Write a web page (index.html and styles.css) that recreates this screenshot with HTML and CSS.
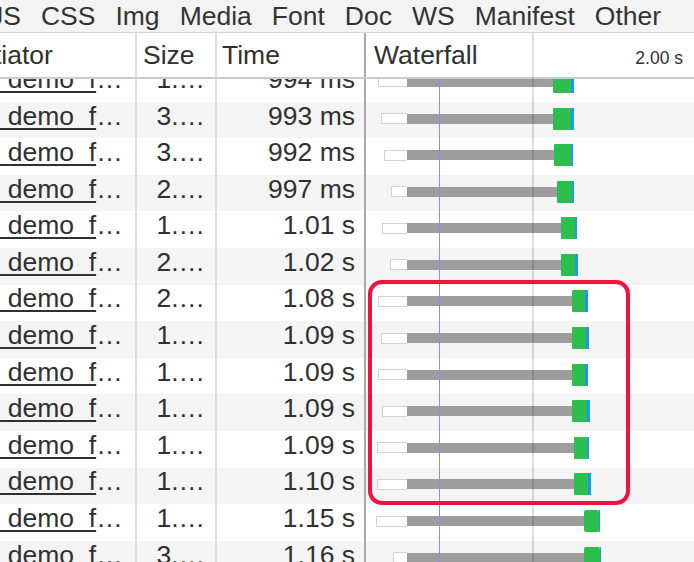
FILE: index.html
```html
<!DOCTYPE html>
<html>
<head>
<meta charset="utf-8">
<link rel="stylesheet" href="styles.css">
</head>
<body>
<div class="page">
  <div class="filters">
    <span>JS</span><span>CSS</span><span>Img</span><span>Media</span><span>Font</span><span>Doc</span><span>WS</span><span>Manifest</span><span>Other</span>
  </div>
  <div class="table">
    <div class="head">
      <div class="cell c-init"><span class="init-label">Initiator</span></div>
      <div class="cell c-size">Size</div>
      <div class="cell c-time">Time</div>
      <div class="cell c-wf"><span>Waterfall</span><span class="tick">2.00 s</span></div>
    </div>
    <div class="body">
      <div class="row first">
        <div class="cell c-init"><a class="link">_demo_f</a>…</div>
        <div class="cell c-size">1.…</div>
        <div class="cell c-time">994 ms</div>
        <div class="cell c-wf"><div class="track" style="margin-left:12px"><i class="q" style="width:29px"></i><i class="w" style="width:146px"></i><i class="g" style="width:18px"></i><i class="b" style="width:3px"></i></div></div>
      </div>
      <div class="row alt">
        <div class="cell c-init"><a class="link">_demo_f</a>…</div>
        <div class="cell c-size">3.…</div>
        <div class="cell c-time">993 ms</div>
        <div class="cell c-wf"><div class="track" style="margin-left:15px"><i class="q" style="width:26px"></i><i class="w" style="width:146px"></i><i class="g" style="width:18px"></i><i class="b" style="width:3px"></i></div></div>
      </div>
      <div class="row">
        <div class="cell c-init"><a class="link">_demo_f</a>…</div>
        <div class="cell c-size">3.…</div>
        <div class="cell c-time">992 ms</div>
        <div class="cell c-wf"><div class="track" style="margin-left:18px"><i class="q" style="width:23px"></i><i class="w" style="width:147px"></i><i class="g" style="width:17px"></i><i class="b" style="width:2px"></i></div></div>
      </div>
      <div class="row alt">
        <div class="cell c-init"><a class="link">_demo_f</a>…</div>
        <div class="cell c-size">2.…</div>
        <div class="cell c-time">997 ms</div>
        <div class="cell c-wf"><div class="track" style="margin-left:25px"><i class="q" style="width:16px"></i><i class="w" style="width:150px"></i><i class="g" style="width:15px"></i><i class="b" style="width:2px"></i></div></div>
      </div>
      <div class="row">
        <div class="cell c-init"><a class="link">_demo_f</a>…</div>
        <div class="cell c-size">1.…</div>
        <div class="cell c-time">1.01 s</div>
        <div class="cell c-wf"><div class="track" style="margin-left:16px"><i class="q" style="width:25px"></i><i class="w" style="width:154px"></i><i class="g" style="width:14px"></i><i class="b" style="width:2px"></i></div></div>
      </div>
      <div class="row alt">
        <div class="cell c-init"><a class="link">_demo_f</a>…</div>
        <div class="cell c-size">2.…</div>
        <div class="cell c-time">1.02 s</div>
        <div class="cell c-wf"><div class="track" style="margin-left:24px"><i class="q" style="width:17px"></i><i class="w" style="width:154px"></i><i class="g" style="width:14px"></i><i class="b" style="width:3px"></i></div></div>
      </div>
      <div class="row">
        <div class="cell c-init"><a class="link">_demo_f</a>…</div>
        <div class="cell c-size">2.…</div>
        <div class="cell c-time">1.08 s</div>
        <div class="cell c-wf"><div class="track" style="margin-left:12px"><i class="q" style="width:29px"></i><i class="w" style="width:165px"></i><i class="g" style="width:13px"></i><i class="b" style="width:3px"></i></div></div>
      </div>
      <div class="row alt">
        <div class="cell c-init"><a class="link">_demo_f</a>…</div>
        <div class="cell c-size">1.…</div>
        <div class="cell c-time">1.09 s</div>
        <div class="cell c-wf"><div class="track" style="margin-left:15px"><i class="q" style="width:26px"></i><i class="w" style="width:165px"></i><i class="g" style="width:14px"></i><i class="b" style="width:3px"></i></div></div>
      </div>
      <div class="row">
        <div class="cell c-init"><a class="link">_demo_f</a>…</div>
        <div class="cell c-size">1.…</div>
        <div class="cell c-time">1.09 s</div>
        <div class="cell c-wf"><div class="track" style="margin-left:12px"><i class="q" style="width:29px"></i><i class="w" style="width:165px"></i><i class="g" style="width:13px"></i><i class="b" style="width:3px"></i></div></div>
      </div>
      <div class="row alt">
        <div class="cell c-init"><a class="link">_demo_f</a>…</div>
        <div class="cell c-size">1.…</div>
        <div class="cell c-time">1.09 s</div>
        <div class="cell c-wf"><div class="track" style="margin-left:16px"><i class="q" style="width:25px"></i><i class="w" style="width:165px"></i><i class="g" style="width:15px"></i><i class="b" style="width:3px"></i></div></div>
      </div>
      <div class="row">
        <div class="cell c-init"><a class="link">_demo_f</a>…</div>
        <div class="cell c-size">1.…</div>
        <div class="cell c-time">1.09 s</div>
        <div class="cell c-wf"><div class="track" style="margin-left:11px"><i class="q" style="width:30px"></i><i class="w" style="width:167px"></i><i class="g" style="width:13px"></i><i class="b" style="width:2px"></i></div></div>
      </div>
      <div class="row alt">
        <div class="cell c-init"><a class="link">_demo_f</a>…</div>
        <div class="cell c-size">1.…</div>
        <div class="cell c-time">1.10 s</div>
        <div class="cell c-wf"><div class="track" style="margin-left:11px"><i class="q" style="width:30px"></i><i class="w" style="width:167px"></i><i class="g" style="width:14px"></i><i class="b" style="width:3px"></i></div></div>
      </div>
      <div class="row">
        <div class="cell c-init"><a class="link">_demo_f</a>…</div>
        <div class="cell c-size">1.…</div>
        <div class="cell c-time">1.15 s</div>
        <div class="cell c-wf"><div class="track" style="margin-left:10px"><i class="q" style="width:31px"></i><i class="w" style="width:177px"></i><i class="g round" style="width:15px"></i><i class="b" style="width:1px"></i></div></div>
      </div>
      <div class="row alt">
        <div class="cell c-init"><a class="link">_demo_f</a>…</div>
        <div class="cell c-size">3.…</div>
        <div class="cell c-time">1.16 s</div>
        <div class="cell c-wf"><div class="track" style="margin-left:27px"><i class="q" style="width:14px"></i><i class="w" style="width:177px"></i><i class="g round" style="width:16px"></i><i class="b" style="width:1px"></i></div></div>
      </div>
    </div>
    <div class="gridline"></div>
    <div class="dcl"></div>
  </div>
  <div class="highlight"></div>
</div>
</body>
</html>
```

FILE: styles.css
```css
* { box-sizing: border-box; }
html, body { margin: 0; padding: 0; background: #fff; }
body {
  font-family: "Liberation Sans", Arial, sans-serif;
  font-size: 26.5px;
  color: #303030;
}
.page {
  position: relative;
  width: 694px;
  height: 562px;
  overflow: hidden;
}
.filters {
  height: 33px;
  background: #f3f3f3;
  border-bottom: 1px solid #d6d6d6;
  display: flex;
  align-items: center;
  gap: 20px;
  margin-left: -10px;
  padding-left: 0;
  white-space: nowrap;
  color: #333;
}
.table {
  position: relative;
  height: 529px;
}
.head, .row {
  display: grid;
  grid-template-columns: 137px 80px 149px 328px;
}
.head {
  height: 46px;
  border-bottom: 2px solid #cbcbcb;
  background: #fff;
  position: relative;
  z-index: 2;
}
.cell {
  display: flex;
  align-items: center;
  overflow: hidden;
  white-space: nowrap;
}
.c-init, .c-size { border-right: 2px solid #dcdcdc; }
.c-time { border-right: 2px solid #a9a9a9; }
.head .c-size { padding-left: 6px; }
.head .c-time { padding-left: 5px; }
.head .c-wf {
  padding-left: 8px;
  padding-right: 11px;
  justify-content: space-between;
}
.init-label { margin-left: -34px; }
.tick {
  font-size: 17.5px;
  padding-top: 7px;
}
.body {
  height: 483px;
  overflow: hidden;
}
.row {
  height: 36.6px;
  background: #fff;
}
.row.alt { background: #f4f4f4; }
.row.first { margin-top: -13.9px; }
.row .c-init, .row .c-size, .row .c-time { padding-bottom: 8px; }
.row .c-size { justify-content: flex-end; padding-right: 10px; }
.row .c-time { justify-content: flex-end; padding-right: 9px; }
.link {
  margin-left: -7px;
  text-decoration: underline;
  text-decoration-thickness: 2px;
  text-underline-offset: 3px;
  color: #303030;
}
.row .c-wf { padding-bottom: 3px; }
.track {
  display: flex;
  align-items: center;
}
.track i { display: block; flex: none; }
.q {
  height: 11px;
  background: #fff;
  border: 1.5px solid #d2d2d2;
  border-right: none;
}
.w {
  height: 10px;
  background: #9d9d9d;
}
.g {
  height: 22px;
  background: #2cbf4e;
  border-radius: 1px 0 0 1px;
}
.g.round { border-radius: 2px; }
.b {
  height: 22px;
  background: #2196f3;
}
.gridline {
  position: absolute;
  left: 532px;
  top: 0;
  bottom: 0;
  width: 2px;
  background: rgba(0, 0, 0, 0.13);
  z-index: 3;
}
.dcl {
  position: absolute;
  left: 439px;
  top: 46px;
  bottom: 0;
  width: 1px;
  background: #8a8aff;
  z-index: 3;
}
.highlight {
  position: absolute;
  left: 368px;
  top: 280px;
  width: 262px;
  height: 225px;
  border: 4.5px solid #f2123e;
  border-radius: 14px;
  z-index: 5;
}
```
